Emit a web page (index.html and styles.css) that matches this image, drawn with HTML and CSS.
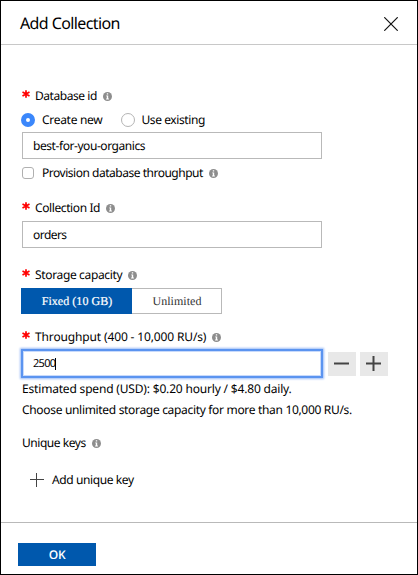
FILE: index.html
```html
<!DOCTYPE html>
<html lang="en">
<head>
<meta charset="utf-8">
<title>Add Collection</title>
<link rel="stylesheet" href="styles.css">
</head>
<body>
<svg class="defs" width="0" height="0" aria-hidden="true">
  <symbol id="info" viewBox="0 0 9 9">
    <circle cx="4.5" cy="4.5" r="4.5" fill="#8d8d8d"/>
    <path d="M3.8 1.3h1.4v1.3H3.8zM3.2 3.5h2v3.1h.7v.8H3.1v-.8h.7V4.3h-.6z" fill="#fff"/>
  </symbol>
  <symbol id="star" viewBox="0 0 8 8">
    <path d="M4 .2v7.6M.5 2.1l7 3.8M7.5 2.1l-7 3.8" stroke="#ff0000" stroke-width="1.7"/>
  </symbol>
</svg>
<main class="panel">
  <header class="header">
    <h1 class="title">Add Collection</h1>
    <svg class="close" viewBox="0 0 14 14"><path d="M.3.3l13.4 13.4M13.7.3L.3 13.7" stroke="#111" stroke-width="1.2"/></svg>
  </header>
  <form class="form">
    <div class="row label-row first"><svg class="star"><use href="#star"/></svg><span class="t-db">Database id</span><svg class="info"><use href="#info"/></svg></div>
    <div class="row radios">
      <span class="radio on"></span><span class="option t-create">Create new</span>
      <span class="radio"></span><span class="option t-use">Use existing</span>
    </div>
    <div class="field"><span class="t-best">best-for-you-organics</span></div>
    <div class="row provision"><span class="check"></span><span class="t-prov">Provision database throughput</span><svg class="info"><use href="#info"/></svg></div>
    <div class="row label-row collection"><svg class="star"><use href="#star"/></svg><span class="t-coll">Collection Id</span><svg class="info"><use href="#info"/></svg></div>
    <div class="field"><span class="t-orders">orders</span></div>
    <div class="row label-row storage"><svg class="star"><use href="#star"/></svg><span class="t-stor">Storage capacity</span><svg class="info"><use href="#info"/></svg></div>
    <div class="segments"><span class="segment selected">Fixed (10 GB)</span><span class="segment">Unlimited</span></div>
    <div class="row label-row throughput"><svg class="star"><use href="#star"/></svg><span class="t-thr">Throughput (400 - 10,000 RU/s)</span><svg class="info"><use href="#info"/></svg></div>
    <div class="stepper">
      <div class="field focused"><span class="t-num">2500</span><i class="caret"></i></div>
      <span class="step"><svg viewBox="0 0 15 15"><path d="M0 7.5h15" stroke="#444" stroke-width="2"/></svg></span>
      <span class="step"><svg viewBox="0 0 15 15"><path d="M0 7.5h15M7.5 0v15" stroke="#444" stroke-width="2"/></svg></span>
    </div>
    <p class="note t-est">Estimated spend (USD): $0.20 hourly / $4.80 daily.</p>
    <p class="note t-choose">Choose unlimited storage capacity for more than 10,000 RU/s.</p>
    <div class="row unique"><span class="t-uniq">Unique keys</span><svg class="info"><use href="#info"/></svg></div>
    <div class="row add"><svg class="plus" viewBox="0 0 14 14"><path d="M0 6.5h14M6.5 0v14" stroke="#444"/></svg><span class="t-add">Add unique key</span></div>
  </form>
  <footer class="footer"><span class="ok">OK</span></footer>
</main>
</body>
</html>
```
FILE: styles.css
```css
* { box-sizing: border-box; }
body { margin: 0; background: #fff; }
.defs { position: absolute; }
svg { display: block; flex: none; }
.panel {
  width: 418px; height: 575px; border: 1px solid #000;
  display: flex; flex-direction: column;
  font: 12px/16px "Noto Sans", sans-serif; color: #000; white-space: nowrap;
  text-rendering: geometricPrecision;
}
.header {
  height: 44px; border-bottom: 1px solid #c8c8c8; flex: none;
  display: flex; align-items: center; justify-content: space-between; padding: 2px 19px 0 19px;
}
.title { margin: -2px 0 0; font-size: 16px; line-height: 20px; font-weight: 400; letter-spacing: -.6px; }
.close { width: 14px; height: 14px; }
.form { height: 477px; padding: 43px 0 0 21px; flex: none; }
.row { display: flex; align-items: center; height: 16px; }
.info { width: 9px; height: 9px; margin-left: 6px; }
.star { width: 8px; height: 8px; margin: -5px 5px 0 0; }
.radios { margin: 8px 0 4px -1px; }
.radio { width: 14px; height: 14px; border: 1px solid #b4b4b4; border-radius: 50%; background: #fff; }
.radio.on { border: 5px solid #3b87fb; }
.option { margin-left: 7px; }
.option + .radio { margin-left: 19px; }
.field { width: 300px; height: 27px; border: 1px solid #b9b9b9; padding-left: 10px; display: flex; align-items: center; }
.provision { margin-top: 6px; }
.check { width: 12px; height: 12px; border: 1px solid #b0b0b0; border-radius: 3px; margin-right: 8px; }
.collection { margin: 19px 0 5px; }
.storage { margin: 19px 0 5px; }
.segments { display: flex; width: 201px; height: 26px; margin-left: -1px; border: 1px solid #b9b9b9; font: 12px/24px "Liberation Serif", serif; color: #333; text-align: center; }
.segment { flex: 1; letter-spacing: .05px; padding-left: 1px; }
.selected { flex: 0 0 111px; margin: -1px 0 -1px -1px; line-height: 26px; background: #0058ad; color: #fff; -webkit-text-stroke: .2px #fff; }
.throughput { margin: 15px 0 5px; }
.stepper { display: flex; align-items: center; height: 27px; }
.focused { border: 1px solid #5b94f0; box-shadow: 0 0 0 1px #5b94f0, inset 0 0 0 1px #c8dafb, 0 0 2px 2px #9bbcf6; }
.caret { width: 1px; height: 12px; background: #000; }
.step { width: 28px; height: 24px; background: #e8e8e8; margin-left: 6px; display: flex; align-items: center; justify-content: center; }
.step + .step { margin-left: 4px; }
.step svg { width: 15px; height: 15px; margin-left: -1px; }
.note { margin: 4px 0 0; height: 16px; }
.note + .note { margin-top: 5px; }
.unique { margin-top: 17px; }
.add { margin: 21px 0 0 8px; }
.plus { width: 14px; height: 14px; margin: -1px 8px 0 0; }
.t-db { letter-spacing: -.45px; }
.t-create { letter-spacing: -.3px; }
.t-use { letter-spacing: -.4px; margin-left: 6px; }
.t-best { letter-spacing: -.43px; }
.t-prov { letter-spacing: -.48px; }
.t-coll { letter-spacing: -.4px; }
.t-orders { letter-spacing: -.55px; }
.t-stor { letter-spacing: -.35px; }
.t-thr { letter-spacing: -.14px; }
.t-num { font-size: 11px; letter-spacing: -.7px; }
.t-est { letter-spacing: -.18px; }
.t-choose { letter-spacing: -.32px; }
.t-uniq { letter-spacing: -.45px; }
.t-add { letter-spacing: -.4px; }
.footer { border-top: 1px solid #b9b9b9; flex: 1; padding: 20px 0 0 17px; }
.ok { display: block; width: 78px; height: 23px; background: #0058ad; color: #fff; text-align: center; font: 600 12px/23px "Open Sans", sans-serif; letter-spacing: -.4px; }
```
